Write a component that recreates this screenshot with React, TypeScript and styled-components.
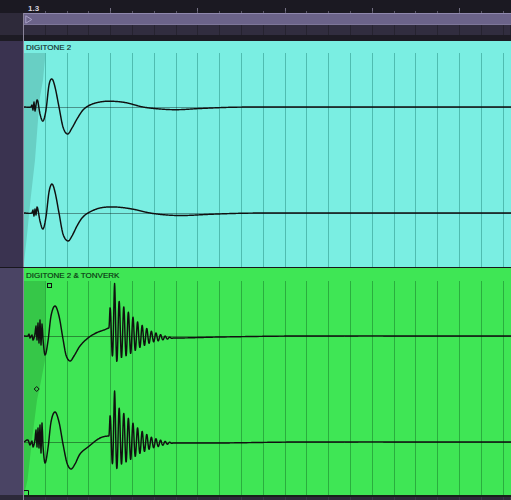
import React from 'react';
import styled, { createGlobalStyle } from 'styled-components';

type Pt = [number, number];

const GlobalStyle = createGlobalStyle`
  html, body { margin: 0; padding: 0; background: #1b1922; }
  body { width: 511px; height: 500px; overflow: hidden; font-family: "Liberation Sans", Arial, sans-serif; }
`;

const CLIP_X = 24;
const CLIP_W = 487;
const GRID = 21.8;

function spline(pts: Pt[], x: number): number {
  if (x <= pts[0][0]) return pts[0][1];
  if (x >= pts[pts.length - 1][0]) return pts[pts.length - 1][1];
  let i = 0;
  while (pts[i + 1][0] < x) i++;
  const p0 = pts[Math.max(0, i - 1)];
  const p1 = pts[i];
  const p2 = pts[i + 1];
  const p3 = pts[Math.min(pts.length - 1, i + 2)];
  const h = p2[0] - p1[0];
  const t = (x - p1[0]) / h;
  const m1 = ((p2[1] - p0[1]) / (p2[0] - p0[0])) * h;
  const m2 = ((p3[1] - p1[1]) / (p3[0] - p1[0])) * h;
  const t2 = t * t;
  const t3 = t2 * t;
  return (2 * t3 - 3 * t2 + 1) * p1[1] + (t3 - 2 * t2 + t) * m1 + (-2 * t3 + 3 * t2) * p2[1] + (t3 - t2) * m2;
}

function lerp(pts: Pt[], x: number): number {
  if (x <= pts[0][0]) return pts[0][1];
  for (let i = 0; i < pts.length - 1; i++) {
    if (x <= pts[i + 1][0]) {
      const t = (x - pts[i][0]) / (pts[i + 1][0] - pts[i][0]);
      return pts[i][1] + (pts[i + 1][1] - pts[i][1]) * t;
    }
  }
  return pts[pts.length - 1][1];
}

const ENV: Pt[] = [
  [0, 0], [1.15, 20], [3.45, 30], [5.75, 46], [8.05, 34], [10.35, 30],
  [20, 22], [30, 13], [42, 6], [55, 2], [65, 0],
];

function burst(t: number): number {
  if (t < 0 || t > 65) return 0;
  const a = lerp(ENV, t);
  const s = Math.sin((2 * Math.PI * t) / 4.6);
  return -a * s * (s > 0 ? 1 : 0.9);
}

function wavePath(pts: Pt[], cy: number, burstX?: number): string {
  const out: string[] = [];
  let x = CLIP_X;
  while (x <= 511) {
    let y = spline(pts, x);
    if (burstX !== undefined) y += burst(x - burstX);
    out.push(`${(x - CLIP_X).toFixed(2)},${(cy + y).toFixed(2)}`);
    const inBurst = burstX !== undefined && x >= burstX - 1 && x <= burstX + 66;
    x += inBurst ? 0.2 : 0.5;
  }
  return 'M' + out.join('L');
}

const C1_TOP: Pt[] = [
  [24, 0], [31, 0], [32, -2], [33, 3], [34, -5], [35, 4], [36, -2], [37, -7], [38, -5],
  [40, 7], [43, 14], [46, 3], [49, -22], [52, -28], [55, -20], [59, 0], [63, 20], [67.5, 27],
  [72, 21], [77, 12], [83, 3], [90, -2], [100, -5], [110, -5.8], [125, -4.5], [143, 0],
  [160, 2], [177, 2.7], [200, 1.5], [230, 0.3], [260, 0], [511, 0],
];
const C1_BOT: Pt[] = [
  [24, 0], [32, 0], [33, -3], [34, 3], [35, -4], [36, 2], [37, -6], [38, -3],
  [40, 8], [43, 16], [46, 4], [49, -21], [52, -29], [55, -21], [59, 0], [63, 21], [68, 28],
  [72, 23], [77, 13], [82, 5], [88, 0], [100, -5], [115, -6], [132, -4], [150, 0],
  [167, 2], [184, 2.5], [210, 1.3], [240, 0.3], [270, 0], [511, 0],
];
const C2_TOP: Pt[] = [
  [24, 0], [28, 0], [29, -2], [30, 2], [32, -1], [33, 4], [35, -2], [36, -10], [37, 4],
  [38, -13], [39, 7], [40, -16], [41, 9], [42, -12], [43, 3], [45, 19], [48, 5], [51, -20],
  [55, -30], [59, -20], [63, 3], [66, 19], [70, 25], [74, 20], [80, 10], [88, 2], [96, -3],
  [104, -6], [110, -8], [118, -5], [130, -1], [150, 1], [175, 2], [220, 1], [300, 0], [511, 0],
];
const C2_BOT: Pt[] = [
  [24, 0], [28, -2], [30, 3], [32, -1], [33, 5], [35, -2], [36, -12], [37, 5], [38, -14],
  [39, 6], [40, -17], [41, 11], [42, -19], [43, 4], [45, 21], [48, 6], [51, -20], [55, -30],
  [59, -20], [63, 2], [67, 21], [71, 27], [75, 22], [80, 12], [88, 5], [100, -4], [110, -6],
  [118, -4], [130, -1], [150, 1], [175, 1], [220, 1], [300, 0], [511, 0],
];

const gridXs: number[] = [];
for (let k = 1; k <= 22; k++) gridXs.push(Math.round(-1 + GRID * k) + 0.5);

const Screen = styled.div`
  width: 511px;
  height: 500px;
  display: flex;
  flex-direction: column;
  background: #1b1922;
  overflow: hidden;
`;

const Row = styled.div<{ $h: number }>`
  display: flex;
  flex: none;
  height: ${(p) => p.$h}px;
`;

const Gutter = styled.div<{ $bg: string; $line?: string }>`
  width: 23px;
  flex: none;
  background: ${(p) => p.$bg};
  border-right: 1px solid ${(p) => p.$line ?? '#8a8499'};
`;

const Fill = styled.div<{ $bg: string }>`
  flex: 1;
  background: ${(p) => p.$bg};
`;

const RulerLane = styled.div`
  flex: 1;
  padding: 5px 0 0 4px;
  box-sizing: border-box;
  background-image:
    repeating-linear-gradient(to right, #5c586a 0 1px, transparent 1px 21.8px),
    repeating-linear-gradient(to right, #747084 0 1px, transparent 1px 87.2px);
  background-size: 100% 2px, 100% 5px;
  background-position: -1px bottom, -1px bottom;
  background-repeat: no-repeat;
`;

const RulerLabel = styled.span`
  display: block;
  font: bold 8px/8px "Liberation Sans", Arial, sans-serif;
  color: #d6d4de;
`;

const LoopBar = styled.div`
  flex: 1;
  display: flex;
  align-items: center;
  padding-left: 1px;
  background: #6b6389;
  border-top: 1px solid #8f88ad;
  border-bottom: 1px solid #7d7699;
`;

const GridStrip = styled.div`
  flex: 1;
  background-color: #312d3f;
  background-image: repeating-linear-gradient(to right, #262330 0 1px, transparent 1px 21.8px);
  background-position: -1px 0;
`;

const BottomStrip = styled(GridStrip)`
  background-color: #2c2939;
  background-image: repeating-linear-gradient(to right, #3a3648 0 1px, transparent 1px 21.8px);
`;

const Separator = styled.div<{ $h: number; $bg: string }>`
  flex: none;
  height: ${(p) => p.$h}px;
  background: ${(p) => p.$bg};
`;

const Clip = styled.div<{ $bg: string }>`
  flex: 1;
  min-width: 0;
  display: flex;
  flex-direction: column;
  background: ${(p) => p.$bg};
`;

const ClipHeader = styled.div<{ $color: string; $h: number }>`
  flex: none;
  height: ${(p) => p.$h}px;
  box-sizing: border-box;
  padding: ${(p) => p.$h - 10}px 0 0 2px;
  font: 8px/9px "Liberation Sans", Arial, sans-serif;
  color: ${(p) => p.$color};
  -webkit-text-stroke: 0.15px ${(p) => p.$color};
  white-space: nowrap;
`;

const ClipBody = styled.svg`
  display: block;
  flex: none;
`;

type ClipProps = {
  name: string;
  bg: string;
  grid: string;
  fade: string;
  text: string;
  headerH: number;
  bodyH: number;
  fadePts: Pt[];
  waves: { pts: Pt[]; cy: number; burstX?: number }[];
  extras?: boolean;
};

const ClipView: React.FC<ClipProps> = ({ name, bg, grid, fade, text, headerH, bodyH, fadePts, waves, extras }) => (
  <Clip $bg={bg}>
    <ClipHeader $color={text} $h={headerH}>{name}</ClipHeader>
    <ClipBody width={CLIP_W} height={bodyH} viewBox={`0 0 ${CLIP_W} ${bodyH}`}>
      <polygon points={fadePts.map((p) => p.join(',')).join(' ')} fill={fade} />
      {gridXs.map((x) => (
        <line key={x} x1={x} x2={x} y1={0} y2={bodyH} stroke={grid} strokeWidth={1} />
      ))}
      {waves.map((w, i) => (
        <line key={'c' + i} x1={0} x2={CLIP_W} y1={w.cy + 0.5} y2={w.cy + 0.5} stroke="rgba(0,0,0,0.38)" strokeWidth={1} />
      ))}
      {waves.map((w, i) => (
        <path key={'w' + i} d={wavePath(w.pts, w.cy, w.burstX)} fill="none" stroke="#101010" strokeWidth={1.45} strokeLinejoin="round" />
      ))}
      {extras && (
        <g fill="none" stroke="#101010" strokeWidth={1}>
          <rect x={23.5} y={2.5} width={4} height={4} />
          <path d="M12.7 105.5 L15.2 108 L12.7 110.5 L10.2 108 Z" />
          <path d="M0 209.5 H4.5 V214" />
        </g>
      )}
    </ClipBody>
  </Clip>
);

const C1_FADE: Pt[] = [[0, 0], [21, 0], [21, 6], [19, 27], [15.5, 47], [12.5, 87], [11, 107], [6.5, 147], [2.5, 187], [0, 210]];
const C2_FADE: Pt[] = [[0, 0], [22, 0], [22, 55], [21, 79], [17, 100], [13, 119], [8, 159], [3.5, 199], [0, 214]];

export default function App() {
  return (
    <>
      <GlobalStyle />
      <Screen>
        <Row $h={13}>
          <Gutter $bg="#1b1922" $line="#1b1922" />
          <RulerLane>
            <RulerLabel>1.3</RulerLabel>
          </RulerLane>
        </Row>
        <Row $h={12}>
          <Gutter $bg="#2e2a3a" />
          <LoopBar>
            <svg width="8" height="9" viewBox="0 0 8 9">
              <path d="M0.8 0.8 L6.8 4.5 L0.8 8.2 Z" fill="none" stroke="#a9a2c6" strokeWidth="1" />
            </svg>
          </LoopBar>
        </Row>
        <Row $h={10}>
          <Gutter $bg="#2e2a3a" />
          <GridStrip />
        </Row>
        <Row $h={6}>
          <Gutter $bg="#1d1b24" />
          <Fill $bg="#1d1b24" />
        </Row>
        <Row $h={226}>
          <Gutter $bg="#3a3350" />
          <ClipView
            name="DIGITONE 2"
            bg="#7aeee2"
            grid="#4fbcb0"
            fade="#68cfc4"
            text="#0f2a27"
            headerH={12}
            bodyH={214}
            fadePts={C1_FADE}
            waves={[
              { pts: C1_TOP, cy: 54 },
              { pts: C1_BOT, cy: 160 },
            ]}
          />
        </Row>
        <Separator $h={1} $bg="#18161d" />
        <Row $h={227}>
          <Gutter $bg="#4a4464" />
          <ClipView
            name="DIGITONE 2 & TONVERK"
            bg="#3fe655"
            grid="#2aae3e"
            fade="#36c748"
            text="#0a3011"
            headerH={13}
            bodyH={214}
            fadePts={C2_FADE}
            waves={[
              { pts: C2_TOP, cy: 55, burstX: 108.85 },
              { pts: C2_BOT, cy: 161, burstX: 108.85 },
            ]}
            extras
          />
        </Row>
        <Row $h={2}>
          <Gutter $bg="#2c2939" />
          <Fill $bg="#17221a" />
        </Row>
        <Row $h={3}>
          <Gutter $bg="#2c2939" />
          <BottomStrip />
        </Row>
      </Screen>
    </>
  );
}
